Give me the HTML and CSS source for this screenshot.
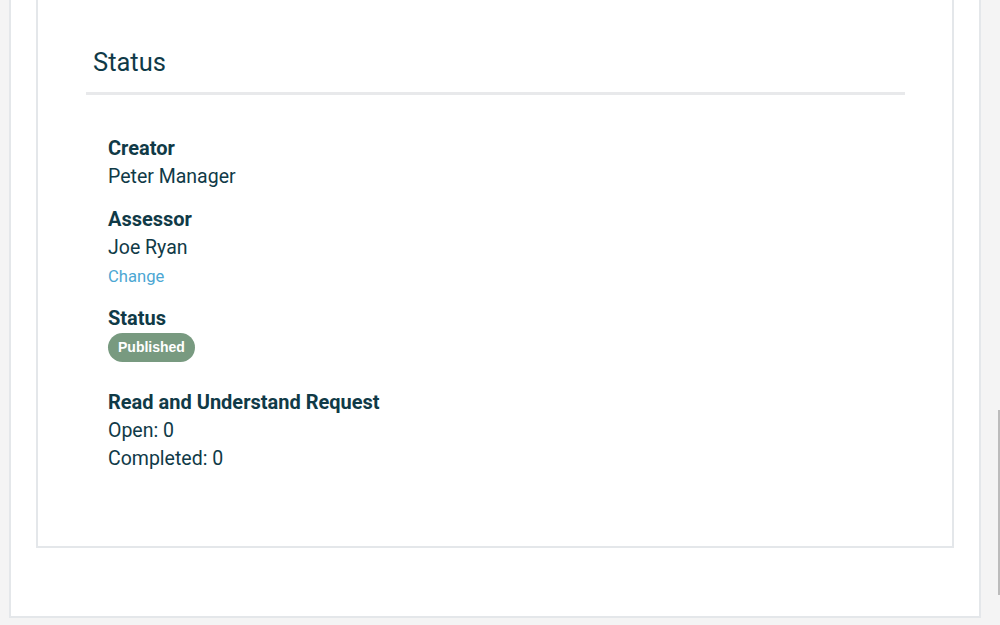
FILE: index.html
```html
<!DOCTYPE html>
<html lang="en">
<head>
    <meta charset="UTF-8">
    <meta name="viewport" content="width=device-width, initial-scale=1.0">
    <title>Status</title>
    <link rel="stylesheet" href="styles.css">
</head>
<body>
    <div class="page">
        <div class="card">
            <div class="card-header">
                <h2>Status</h2>
            </div>
            <div class="card-body">
                <div class="field">
                    <div class="label">Creator</div>
                    <div class="value">Peter Manager</div>
                </div>
                <div class="field">
                    <div class="label">Assessor</div>
                    <div class="value">Joe Ryan</div>
                    <a class="link" href="#">Change</a>
                </div>
                <div class="field">
                    <div class="label">Status</div>
                    <span class="badge">Published</span>
                </div>
                <div class="field field-wide">
                    <div class="label">Read and Understand Request</div>
                    <div class="value">Open: 0</div>
                    <div class="value">Completed: 0</div>
                </div>
            </div>
        </div>
    </div>
    <div class="scroll-thumb"></div>
</body>
</html>
```

FILE: styles.css
```css
body {
    font-family: Roboto, "Liberation Sans", sans-serif;
    background: #f4f4f4;
    color: #103a47;
    margin: 0;
    height: 625px;
    overflow: hidden;
}

.page {
    margin: 0 19px 0 9px;
    background: #fff;
    border: 2px solid #e4e7ea;
    border-top: none;
    padding: 0 25px 68px 25px;
}

.card {
    border: 2px solid #e4e7ea;
    border-top: none;
    padding: 48px 47px 74px 48px;
}

.card-header {
    border-bottom: 3px solid #e8e9eb;
    padding: 0 7px 16px 7px;
}

.card-header h2 {
    margin: 0;
    font-size: 25.5px;
    font-weight: 400;
    line-height: 28px;
    color: #0f3a48;
}

.card-body {
    padding: 39px 22px 0 22px;
}

.field {
    margin-bottom: 15px;
}

.field-wide {
    margin-top: 26px;
    margin-bottom: 0;
}

.label {
    font-size: 20px;
    font-weight: 700;
    line-height: 28px;
}

.value {
    font-size: 19.5px;
    line-height: 26px;
    padding-top: 2px;
}

.link {
    display: block;
    margin-top: 4px;
    font-size: 16.6px;
    line-height: 24px;
    color: #4ca7d3;
    text-decoration: none;
}

.badge {
    display: inline-block;
    margin-top: 1px;
    height: 29px;
    line-height: 29px;
    padding: 0 10px;
    border-radius: 15px;
    background: #789a80;
    color: #fff;
    font-family: "Liberation Sans", Arial, sans-serif;
    font-size: 14px;
    font-weight: 700;
    vertical-align: top;
}

.scroll-thumb {
    position: fixed;
    right: 0;
    top: 410px;
    width: 2px;
    height: 185px;
    background: #bcbcbc;
}
```
